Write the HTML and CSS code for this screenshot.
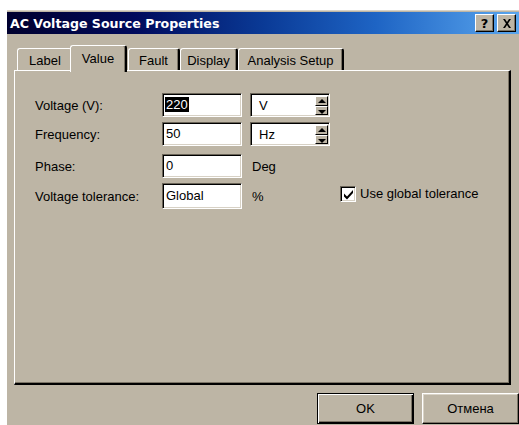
FILE: index.html
```html
<!DOCTYPE html>
<html lang="en">
<head>
<meta charset="utf-8">
<title>AC Voltage Source Properties</title>
<link rel="stylesheet" href="styles.css">
</head>
<body>
<div class="dialog">
  <div class="titlebar">
    <span class="title">AC Voltage Source Properties</span>
    <div class="caption-buttons">
      <button class="cap-btn" type="button">?</button>
      <button class="cap-btn close" type="button">
        <svg width="10" height="9" viewBox="0 0 10 9"><path d="M1 0h2l2 3 2-3h2L6 4.5 9 9H7L5 6 3 9H1l3-4.5z" fill="#000"/></svg>
      </button>
    </div>
  </div>

  <div class="tabs">
    <div class="tab tab-label">Label</div>
    <div class="tab tab-value active">Value</div>
    <div class="tab tab-fault">Fault</div>
    <div class="tab tab-display">Display</div>
    <div class="tab tab-analysis">Analysis Setup</div>
  </div>

  <div class="panel">
    <div class="form">
      <div class="row row-1">
        <label class="lbl">Voltage (V):</label>
        <div class="field"><span class="sel">220</span></div>
        <div class="combo"><span class="combo-text">V</span><span class="spin"><span class="spin-up"></span><span class="spin-down"></span></span></div>
      </div>
      <div class="row row-2">
        <label class="lbl">Frequency:</label>
        <div class="field">50</div>
        <div class="combo"><span class="combo-text">Hz</span><span class="spin"><span class="spin-up"></span><span class="spin-down"></span></span></div>
      </div>
      <div class="row row-3">
        <label class="lbl">Phase:</label>
        <div class="field">0</div>
        <span class="unit">Deg</span>
      </div>
      <div class="row row-4">
        <label class="lbl">Voltage tolerance:</label>
        <div class="field">Global</div>
        <span class="unit">%</span>
        <label class="check">
          <span class="box"><svg width="11" height="11" viewBox="0 0 11 11"><path d="M1 4.5l3 3 6-6.5v3l-6 6.5-3-3z" fill="#000"/></svg></span>
          <span>Use global tolerance</span>
        </label>
      </div>
    </div>
  </div>

  <div class="actions">
    <button class="btn default" type="button">OK</button>
    <button class="btn" type="button">Отмена</button>
  </div>
</div>
</body>
</html>
```
FILE: styles.css
```css
html, body {
  margin: 0;
  padding: 0;
  background: #fff;
}

body {
  font-family: "Liberation Sans", Arial, sans-serif;
  font-size: 13px;
  color: #000;
}

.dialog {
  margin: 10px 0 0 7px;
  width: 512px;
  height: 415px;
  background: #bdb5a5;
  border-top: 1px solid #d9d3c7;
  box-sizing: border-box;
  position: relative;
}

/* caption */
.titlebar {
  height: 22px;
  margin-top: 1px;
  display: flex;
  align-items: center;
  justify-content: space-between;
  background: linear-gradient(to right, #00002e 0%, #000a5c 25%, #0a3a96 50%, #1e64c4 72%, #5aa6ee 100%);
  color: #fff;
}

.title {
  font-family: "DejaVu Sans", Verdana, sans-serif;
  font-weight: bold;
  font-size: 12.6px;
  padding-left: 3px;
}

.caption-buttons {
  display: flex;
  gap: 3px;
  padding-right: 3px;
}

.cap-btn {
  width: 19px;
  height: 18px;
  padding: 0;
  margin: 0;
  background: #bdb5a5;
  border: 1px solid;
  border-color: #fff #000 #000 #fff;
  box-shadow: inset -1px -1px 0 #7b7466;
  font-family: "DejaVu Sans", sans-serif;
  font-weight: bold;
  font-size: 13px;
  line-height: 15px;
  display: flex;
  align-items: center;
  justify-content: center;
  color: #000;
}

/* tab strip */
.tabs {
  position: relative;
  height: 25px;
  margin: 11px 0 0 0;
  z-index: 2;
}

.tab {
  position: absolute;
  top: 3px;
  height: 22px;
  box-sizing: border-box;
  padding-top: 4px;
  text-align: center;
  border-top: 1px solid #fff;
  border-left: 1px solid #fff;
  border-right: 2px solid #000;
  border-radius: 3px 3px 0 0;
  box-shadow: inset -1px 0 0 #7b7466;
  background: #bdb5a5;
}

.tab-label { left: 10px; width: 55px; border-right: none; box-shadow: none; }
.tab-value { left: 63px; width: 57px; }
.tab-fault { left: 121px; width: 52px; }
.tab-display { left: 173px; width: 58px; }
.tab-analysis { left: 231px; width: 106px; }

.tab.active {
  top: 0;
  height: 27px;
  padding-top: 5px;
  z-index: 3;
  border-left: 1px solid #fff;
}

/* page frame */
.panel {
  position: relative;
  z-index: 1;
  margin-left: 7px;
  width: 497px;
  height: 315px;
  box-sizing: border-box;
  border-top: 1px solid #fff;
  border-left: 1px solid #fff;
  border-right: 2px solid #000;
  border-bottom: 2px solid #000;
  box-shadow: inset -1px -1px 0 #7b7466;
  padding: 22px 0 0 20px;
}

.form {
  display: flex;
  flex-direction: column;
}

.row {
  display: grid;
  grid-template-columns: 127px 88px 90px auto;
  align-items: center;
  height: 24px;
}

.row-2 { margin-top: 5px; }
.row-3 { margin-top: 8px; }
.row-4 { margin-top: 5px; height: 26px; }

.lbl {
  padding-top: 1px;
}

.field,
.combo {
  width: 80px;
  height: 24px;
  box-sizing: border-box;
  background: #fff;
  border: 1px solid;
  border-color: #6a6458 #fff #fff #6a6458;
  box-shadow: inset 1px 1px 0 #000, inset -1px -1px 0 #d7d1c5;
  padding: 3px 0 0 3px;
  line-height: 16px;
}

.row-4 .field { height: 26px; padding-top: 4px; }

.sel {
  background: #000;
  color: #fff;
  padding: 0 1px;
  margin-left: -1px;
}

.combo {
  display: flex;
  justify-content: space-between;
  padding: 0 0 0 2px;
}

.combo-text {
  padding: 4px 0 0 6px;
  line-height: 16px;
}

.spin {
  width: 13px;
  display: flex;
  flex-direction: column;
  margin: 2px 1px 1px 0;
}

.spin-up,
.spin-down {
  flex: 1;
  box-sizing: border-box;
  background: #bdb5a5;
  border: 1px solid;
  border-color: #fff #000 #000 #fff;
  position: relative;
}

.spin-up::after,
.spin-down::after {
  content: "";
  position: absolute;
  left: 2px;
  width: 0;
  height: 0;
  border-left: 4px solid transparent;
  border-right: 4px solid transparent;
}

.spin-up::after {
  top: 2px;
  border-bottom: 4px solid #000;
}

.spin-down::after {
  top: 3px;
  border-top: 4px solid #000;
}

.unit {
  padding-left: 2px;
}

.check {
  display: flex;
  align-items: center;
  gap: 4px;
  margin-top: -5px;
}

.box {
  width: 16px;
  height: 16px;
  box-sizing: border-box;
  background: #fff;
  border: 1px solid;
  border-color: #6a6458 #fff #fff #6a6458;
  box-shadow: inset 1px 1px 0 #000, inset -1px -1px 0 #d7d1c5;
  display: flex;
  align-items: center;
  justify-content: center;
  padding: 1px 0 0 1px;
}

/* dialog buttons */
.actions {
  display: flex;
  justify-content: flex-end;
  gap: 8px;
  padding: 8px 0 0 0;
}

.btn {
  width: 97px;
  height: 31px;
  margin: 0;
  padding: 0;
  box-sizing: border-box;
  background: #bdb5a5;
  border: 1px solid;
  border-color: #fff #000 #000 #fff;
  box-shadow: inset -1px -1px 0 #7b7466, inset 1px 1px 0 #d9d3c7;
  font-family: "Liberation Sans", Arial, sans-serif;
  font-size: 13px;
  color: #000;
}

.btn.default {
  border: 1px solid #000;
  box-shadow: inset 1px 1px 0 #fff, inset -1px -1px 0 #000, inset -2px -2px 0 #7b7466;
}
```
